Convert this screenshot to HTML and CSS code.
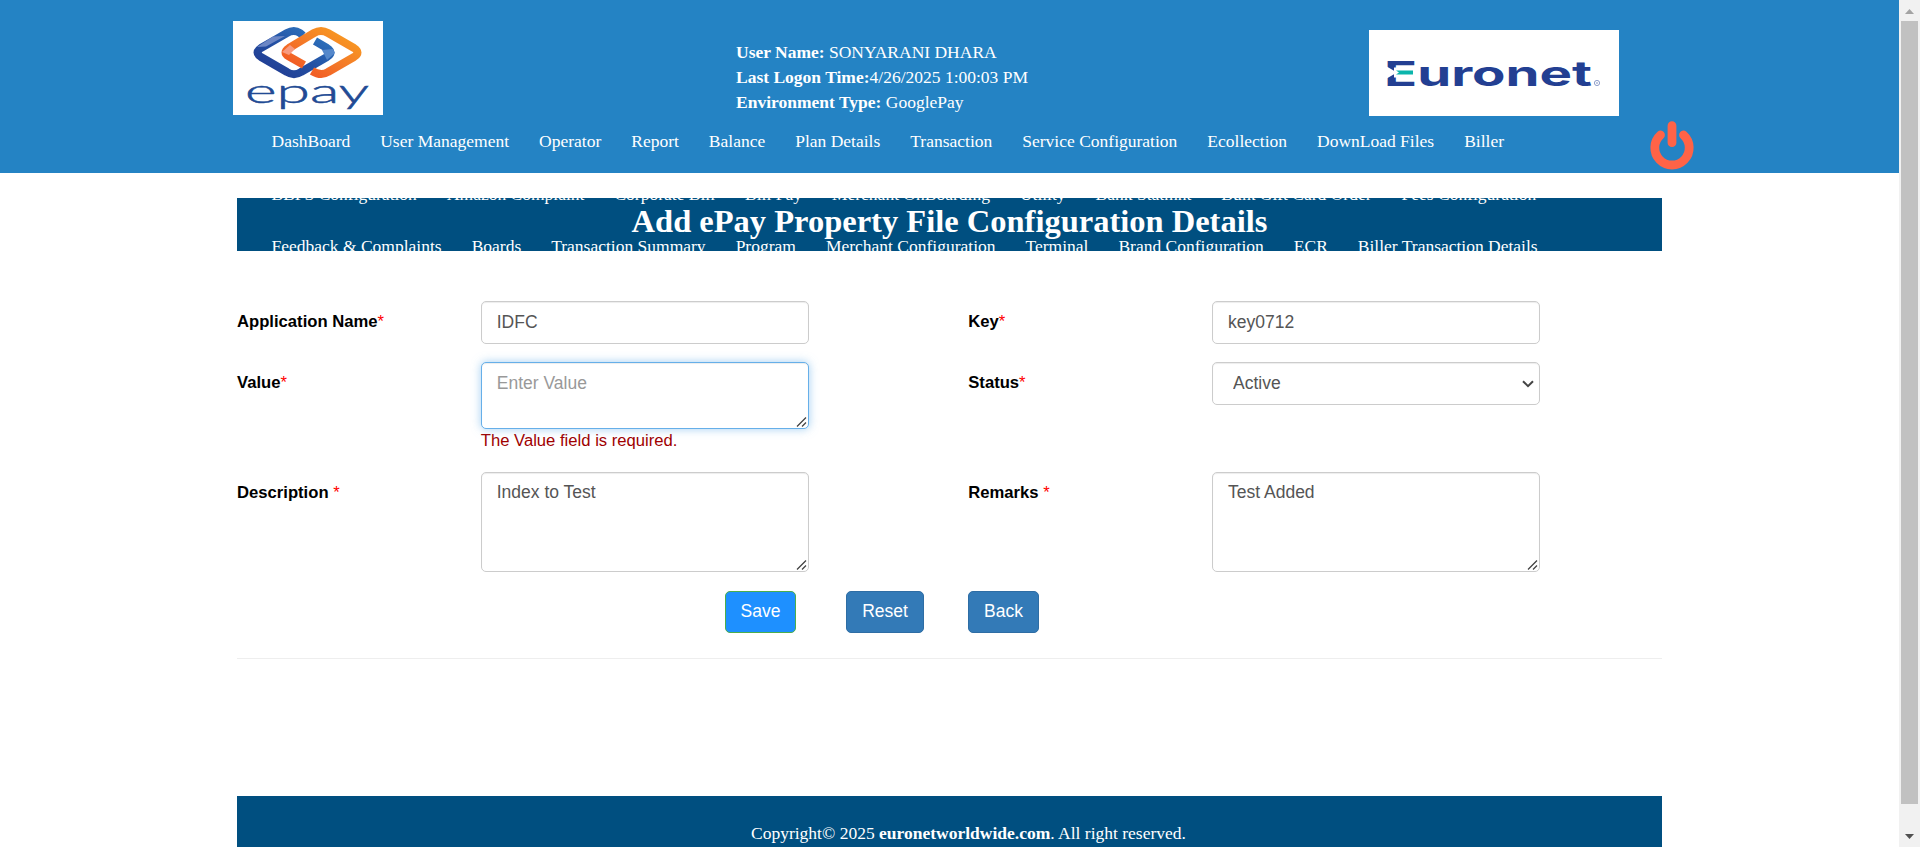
FILE: index.html
```html
<!DOCTYPE html>
<html lang="en">
<head>
<meta charset="utf-8">
<title>ePay Property File Configuration</title>
<link rel="stylesheet" href="styles.css">
</head>
<body>
<div class="page">
  <header class="header">
    <div class="header-top">
      <svg class="logo-epay" viewBox="0 0 150 94" role="img" aria-label="epay">
        <defs>
          <linearGradient id="blue" x1="0" y1="1" x2="1" y2="0"><stop offset="0" stop-color="#20388f"/><stop offset=".5" stop-color="#2451a4"/><stop offset="1" stop-color="#2f7cc4"/></linearGradient>
          <linearGradient id="orange" x1="0" y1="1" x2="1" y2="0"><stop offset="0" stop-color="#f04e23"/><stop offset=".5" stop-color="#f47a28"/><stop offset="1" stop-color="#f9a11f"/></linearGradient>
        </defs>
        <rect width="150" height="94" fill="#fff"/>
        <g fill="none" stroke-width="8" stroke-linejoin="round">
          <path d="M70 14.500L67 12Q61 8 54 12L28 27Q21 31.500 28 36L54 51Q61 55.500 68 51L94 36Q101 31.500 94 27L82 20" stroke="url(#blue)"/>
          <path d="M71 44L56 35.500Q49 31.500 56 27L81 12Q88 8 95 12L121 27Q128 31.500 121 36L95 51Q88 55.500 79 50" stroke="url(#orange)"/>
        </g>
        <path d="M24 26L40 15.500L52 15L33 25.500Z" fill="#6d87c5"/>
        <path d="M89 29L100 28L102 32L94 39Z" fill="#5588cb"/>
        <path d="M49 31L57 24L62 28L56 34Z" fill="#f79a80"/>
        <text x="12" y="81.500" class="epay-word" textLength="124" lengthAdjust="spacingAndGlyphs">epay</text>
      </svg>
      <div class="user-info">
        <div><b>User Name:</b> SONYARANI DHARA</div>
        <div><b>Last Logon Time:</b>4/26/2025 1:00:03 PM</div>
        <div><b>Environment Type:</b> GooglePay</div>
      </div>
      <svg class="logo-euronet" viewBox="0 0 250 86" role="img" aria-label="Euronet">
        <rect width="250" height="86" fill="#fff"/>
        <text x="15" y="55.500" class="euronet-word" textLength="208" lengthAdjust="spacingAndGlyphs">Euronet</text>
        <path d="M16 35.500L28 42.500L16 49.500Z" fill="#fff"/>
        <path d="M25 37.500H47V47.500H25Z" fill="#fff"/>
        <path d="M27 40.500H44V44.500H27L30 42.500Z" fill="#0bb5ac"/>
        <circle cx="228" cy="53" r="2.600" fill="none" stroke="#7185bb" stroke-width=".8"/>
        <circle cx="228" cy="53" r=".8" fill="#7185bb"/>
      </svg>
    </div>
    <div class="menu">
      <nav class="nav">
        <div class="nav-row"><a>DashBoard</a><a>User Management</a><a>Operator</a><a>Report</a><a>Balance</a><a>Plan Details</a><a>Transaction</a><a>Service Configuration</a><a>Ecollection</a><a>DownLoad Files</a><a>Biller</a></div>
        <div class="nav-row"><a>BBPS Configuration</a><a>Amazon Complaint</a><a>Corporate Bill</a><a>Bill Pay</a><a>Merchant OnBoarding</a><a>Utility</a><a>Bank Statmnt</a><a>Bulk Gift Card Order</a><a>Fees Configuration</a></div>
        <div class="nav-row"><a>Feedback &amp; Complaints</a><a>Boards</a><a>Transaction Summary</a><a>Program</a><a>Merchant Configuration</a><a>Terminal</a><a>Brand Configuration</a><a>ECR</a><a>Biller Transaction Details</a></div>
      </nav>
      <svg class="power" viewBox="0 0 44 49"><path d="M10.500 14A17.200 17.200 0 1 0 33.500 14M22 4.700V21.700" fill="none" stroke="#ff6347" stroke-width="8.800" stroke-linecap="round"/></svg>
    </div>
  </header>

  <main class="container">
    <h1 class="title">Add ePay Property File Configuration Details</h1>
    <form class="form">
      <label>Application Name<i>*</i></label>
      <input class="control" value="IDFC">
      <label>Key<i>*</i></label>
      <input class="control" value="key0712">

      <label>Value<i>*</i></label>
      <div>
        <div class="field">
          <textarea class="control value focused" placeholder="Enter Value"></textarea>
          <svg class="grip" viewBox="0 0 11 10"><path d="M1 9.500L10 .5M6 9.500L10 5.500"/></svg>
        </div>
        <span class="error">The Value field is required.</span>
      </div>
      <label>Status<i>*</i></label>
      <div class="field">
        <select class="control"><option>Active</option></select>
        <svg class="chevron" viewBox="0 0 12 8"><path d="M1 1.200L6 6.200L11 1.200"/></svg>
      </div>

      <label>Description <i>*</i></label>
      <div class="field">
        <textarea class="control tall">Index to Test</textarea>
        <svg class="grip" viewBox="0 0 11 10"><path d="M1 9.500L10 .5M6 9.500L10 5.500"/></svg>
      </div>
      <label>Remarks <i>*</i></label>
      <div class="field">
        <textarea class="control tall">Test Added</textarea>
        <svg class="grip" viewBox="0 0 11 10"><path d="M1 9.500L10 .5M6 9.500L10 5.500"/></svg>
      </div>
    </form>
    <div class="actions">
      <button class="btn save">Save</button>
      <button class="btn reset">Reset</button>
      <button class="btn">Back</button>
    </div>
    <hr class="rule">
    <footer class="footer">Copyright© 2025 <b>euronetworldwide.com</b>. All right reserved.</footer>
  </main>
</div>
<div class="scrollbar">
  <svg class="arrow" viewBox="0 0 21 21"><path d="M6 14L10.500 9L15 14Z" fill="#a3a3a3"/></svg>
  <div class="thumb"></div>
  <svg class="arrow" viewBox="0 0 21 21"><path d="M6 8L10.500 13L15 8Z" fill="#505050"/></svg>
</div>
</body>
</html>
```

FILE: styles.css
```css
* { box-sizing: border-box; }

body {
  margin: 0;
  height: 847px;
  display: flex;
  overflow: hidden;
  background: #fff;
  font: 17.5px/25px "Liberation Serif", "Times New Roman", serif;
}

.page { width: 1899px; height: 847px; overflow: hidden; }

/* Header */
.header {
  position: relative;
  z-index: 1;
  height: 173px;
  background: #2483c4;
  color: #fff;
}
.header-top {
  display: flex;
  align-items: flex-start;
  height: 116px;
  padding-left: 233px;
}
.logo-epay { width: 150px; height: 94px; margin-top: 21px; }
.user-info { width: 633px; margin: 40px 0 0 353px; white-space: nowrap; }
.logo-euronet { width: 250px; height: 86px; margin-top: 30px; }
.epay-word { font: 300 33px Lato, sans-serif; fill: #214a94; stroke: #214a94; stroke-width: .5px; }
.euronet-word { font: 700 34.5px Inter, sans-serif; fill: #233f92; }

/* Menu rows run past the header onto the title band */
.menu { display: flex; align-items: flex-start; padding-left: 256.5px; }
.nav { width: 1393.5px; padding-top: 13px; }
.nav-row { display: flex; height: 52.5px; white-space: nowrap; }
.nav-row a { padding: 0 15px; }
.power { width: 44px; height: 49px; margin-top: 5px; }

/* Content */
.container { width: 1425px; margin-left: 237px; padding-top: 25px; }
.title {
  height: 53px;
  margin: 0;
  background: #004f80;
  color: #fff;
  font-size: 32.5px;
  line-height: 46px;
  text-align: center;
}
.form {
  display: grid;
  grid-template-columns: 243.75px 487.5px 243.75px 1fr;
  grid-template-rows: 61px 110px 100px;
  align-items: start;
  margin-top: 50px;
  font-family: "Liberation Sans", Arial, sans-serif;
}
.form label {
  padding-top: 8px;
  color: #000;
  font-size: 16.65px;
  font-weight: bold;
}
.form i { color: #f00; font-style: normal; font-weight: normal; }

.field { position: relative; width: 328px; }
.control {
  display: block;
  width: 328px;
  height: 43px;
  margin: 0;
  padding: 7px 15px;
  border: 1px solid #ccc;
  border-radius: 5px;
  background-color: #fff;
  box-shadow: inset 0 1px 1px rgba(0, 0, 0, .075);
  color: #555;
  font: 17.5px/25px "Liberation Sans", Arial, sans-serif;
  resize: none;
}
.control::placeholder { color: #999; }
.control.value { height: 67px; padding-top: 8px; }
.control.tall { height: 100px; }
.control.focused {
  border-color: #66afe9;
  box-shadow: inset 0 1px 1px rgba(0, 0, 0, .075), 0 0 10px rgba(102, 175, 233, .6);
}
select.control { appearance: none; padding-left: 20px; }
.grip, .chevron { position: absolute; fill: none; stroke: #444; pointer-events: none; }
.grip { right: 2px; bottom: 2px; width: 11px; height: 10px; stroke-width: 1.3; }
.chevron { right: 6px; top: 18px; width: 12px; height: 8px; stroke-width: 2; }
.error { display: block; line-height: 23px; font-size: 16.65px; color: #a00000; }

.actions { display: flex; align-items: flex-start; height: 67px; padding: 19px 0 0 488px; }
.btn {
  width: 71px;
  height: 42px;
  padding: 0 0 1px;
  border: 1px solid #2e6da4;
  border-radius: 5px;
  background: #337ab7;
  color: #fff;
  font: 17.5px/25px "Liberation Sans", Arial, sans-serif;
}
.btn.save { border-color: #4cae4c; background: #1e90ff; }
.btn.reset { width: 78px; margin: 0 44px 0 50px; }
.rule { height: 1px; margin: 19px 0 137px; border: 0; background: #eee; }
.footer {
  height: 75px;
  padding: 25px 0 0 514px;
  background: #004f80;
  color: #fff;
}

/* Window scrollbar */
.scrollbar { display: flex; flex-direction: column; width: 21px; height: 847px; background: #f1f1f1; }
.arrow { width: 21px; height: 21px; }
.thumb { width: 17px; height: 783px; margin: 0 2px 22px; background: #c1c1c1; }
```
